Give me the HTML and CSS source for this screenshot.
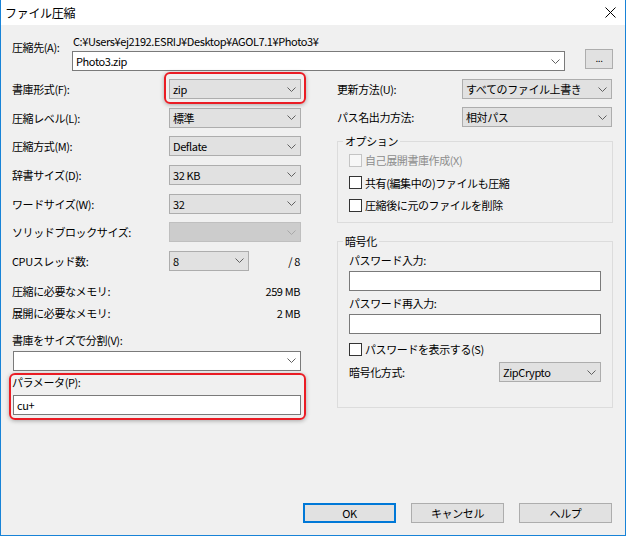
FILE: index.html
```html
<!DOCTYPE html>
<html lang="ja">
<head>
<meta charset="utf-8">
<title>ファイル圧縮</title>
<link rel="stylesheet" href="styles.css">
</head>
<body>
<div class="window">
  <div class="titlebar">
    <span class="title">ファイル圧縮</span>
    <svg class="close" width="11" height="11" viewBox="0 0 11 11"><path d="M0.5 0.5L10.5 10.5M10.5 0.5L0.5 10.5"/></svg>
  </div>
  <div class="content">
    <div class="dest">
      <div class="dest-label">圧縮先(A):</div>
      <div class="path">C:¥Users¥ej2192.ESRIJ¥Desktop¥AGOL7.1¥Photo3¥</div>
      <div class="combo edit dest-combo"><span>Photo3.zip</span><svg class="chev" width="9" height="5" viewBox="0 0 9 5"><path d="M0.5 0.5L4.5 4.5L8.5 0.5"/></svg></div>
      <div class="btn browse">...</div>
    </div>

    <div class="columns">
      <div class="left">
        <div class="lgrid">
          <div class="lbl">書庫形式(F):</div>
          <div class="hl"><div class="combo"><span>zip</span><svg class="chev" width="9" height="5" viewBox="0 0 9 5"><path d="M0.5 0.5L4.5 4.5L8.5 0.5"/></svg></div></div>

          <div class="lbl">圧縮レベル(L):</div>
          <div class="combo"><span>標準</span><svg class="chev" width="9" height="5" viewBox="0 0 9 5"><path d="M0.5 0.5L4.5 4.5L8.5 0.5"/></svg></div>

          <div class="lbl">圧縮方式(M):</div>
          <div class="combo"><span>Deflate</span><svg class="chev" width="9" height="5" viewBox="0 0 9 5"><path d="M0.5 0.5L4.5 4.5L8.5 0.5"/></svg></div>

          <div class="lbl">辞書サイズ(D):</div>
          <div class="combo"><span>32 KB</span><svg class="chev" width="9" height="5" viewBox="0 0 9 5"><path d="M0.5 0.5L4.5 4.5L8.5 0.5"/></svg></div>

          <div class="lbl">ワードサイズ(W):</div>
          <div class="combo"><span>32</span><svg class="chev" width="9" height="5" viewBox="0 0 9 5"><path d="M0.5 0.5L4.5 4.5L8.5 0.5"/></svg></div>

          <div class="lbl">ソリッドブロックサイズ:</div>
          <div class="combo disabled"><span></span><svg class="chev" width="9" height="5" viewBox="0 0 9 5"><path d="M0.5 0.5L4.5 4.5L8.5 0.5"/></svg></div>

          <div class="lbl">CPUスレッド数:</div>
          <div class="cpu">
            <div class="combo cpu-combo"><span>8</span><svg class="chev" width="9" height="5" viewBox="0 0 9 5"><path d="M0.5 0.5L4.5 4.5L8.5 0.5"/></svg></div>
            <span class="cpu-max">/ 8</span>
          </div>
        </div>

        <div class="mem mem1"><span>圧縮に必要なメモリ:</span><span>259 MB</span></div>
        <div class="mem mem2"><span>展開に必要なメモリ:</span><span>2 MB</span></div>

        <div class="split-label">書庫をサイズで分割(V):</div>
        <div class="combo edit split-combo"><span></span><svg class="chev" width="9" height="5" viewBox="0 0 9 5"><path d="M0.5 0.5L4.5 4.5L8.5 0.5"/></svg></div>

        <div class="param">
          <div class="param-label">パラメータ(P):</div>
          <div class="input param-input">cu+</div>
        </div>
      </div>

      <div class="right">
        <div class="rgrid">
          <div class="lbl">更新方法(U):</div>
          <div class="combo"><span>すべてのファイル上書き</span><svg class="chev" width="9" height="5" viewBox="0 0 9 5"><path d="M0.5 0.5L4.5 4.5L8.5 0.5"/></svg></div>
          <div class="lbl">パス名出力方法:</div>
          <div class="combo"><span>相対パス</span><svg class="chev" width="9" height="5" viewBox="0 0 9 5"><path d="M0.5 0.5L4.5 4.5L8.5 0.5"/></svg></div>
        </div>

        <fieldset class="group options">
          <legend>オプション</legend>
          <div class="check disabled"><span class="box"></span><span>自己展開書庫作成(X)</span></div>
          <div class="check"><span class="box"></span><span>共有(編集中の)ファイルも圧縮</span></div>
          <div class="check"><span class="box"></span><span>圧縮後に元のファイルを削除</span></div>
        </fieldset>

        <fieldset class="group crypt">
          <legend>暗号化</legend>
          <div class="flabel">パスワード入力:</div>
          <div class="input"></div>
          <div class="flabel">パスワード再入力:</div>
          <div class="input"></div>
          <div class="check show-pw"><span class="box"></span><span>パスワードを表示する(S)</span></div>
          <div class="method">
            <span>暗号化方式:</span>
            <div class="combo method-combo"><span>ZipCrypto</span><svg class="chev" width="9" height="5" viewBox="0 0 9 5"><path d="M0.5 0.5L4.5 4.5L8.5 0.5"/></svg></div>
          </div>
        </fieldset>
      </div>
    </div>

    <div class="buttons">
      <div class="btn default">OK</div>
      <div class="btn">キャンセル</div>
      <div class="btn">ヘルプ</div>
    </div>
  </div>
</div>
</body>
</html>
```

FILE: styles.css
```css
* { box-sizing: border-box; }
html, body { margin: 0; padding: 0; }
body {
  width: 626px;
  height: 536px;
  background: #f0f0f0;
  font-family: "Noto Sans CJK JP", "Noto Sans", sans-serif;
  font-size: 11px;
  line-height: 14px;
  letter-spacing: -0.4px;
  color: #000;
  overflow: hidden;
}
.window {
  width: 626px;
  height: 536px;
  display: flex;
  flex-direction: column;
  border: 1px solid #1883d7;
  border-top: 0;
  background: #f0f0f0;
}
.titlebar {
  height: 25px;
  flex: none;
  background: #fff;
  display: flex;
  align-items: center;
  justify-content: space-between;
  padding: 0 9px 0 4px;
}
.title { font-size: 12px; letter-spacing: -0.3px; }
.close path { stroke: #000; stroke-width: 1; fill: none; }

.content {
  flex: 1;
  display: flex;
  flex-direction: column;
  padding: 9px 12px 12px 11px;
}

/* destination row */
.dest {
  display: grid;
  grid-template-columns: 60px 493px 1fr;
  grid-template-rows: 14px 20px;
  row-gap: 3px;
}
.dest-label { grid-row: 1 / 3; grid-column: 1; margin-top: 6px; }
.path { grid-row: 1; grid-column: 2; padding-left: 1px; }
.dest-combo { grid-row: 2; grid-column: 2; }

/* combo boxes */
.combo {
  height: 20px;
  display: flex;
  align-items: center;
  justify-content: space-between;
  padding: 0 4px 0 3px;
  background: #e1e1e1;
  border: 1px solid #adadad;
  white-space: nowrap;
}
.combo.edit { background: #fff; border-color: #7a7a7a; }
.combo.disabled { background: #cccccc; border-color: #bfbfbf; }
.chev { flex: none; }
.chev path { fill: none; stroke: #606060; stroke-width: 1; }
.combo.disabled .chev path { stroke: #a8a8a8; }

.input {
  height: 20px;
  background: #fff;
  border: 1px solid #7a7a7a;
  padding: 0 3px;
  display: flex;
  align-items: center;
}

/* columns */
.columns { display: flex; margin-top: 8px; }
.left { width: 289px; display: flex; flex-direction: column; }
.right { width: 276px; margin-left: 36px; display: flex; flex-direction: column; }

.lgrid {
  display: grid;
  grid-template-columns: 157px 132px;
  grid-auto-rows: 20px;
  row-gap: 8.67px;
  align-items: center;
}
.hl { position: relative; }
.hl::after {
  content: "";
  position: absolute;
  top: -7px; left: -5px; right: -5px; bottom: -5px;
  border: 2px solid #ea1c24;
  border-radius: 6px;
  box-shadow: 0 1px 4px rgba(0,0,0,0.3);
}
.cpu { display: flex; align-items: center; }
.cpu-combo { width: 80px; }
.cpu-max { margin-left: auto; padding-right: 1px; }

.mem { display: flex; justify-content: space-between; padding-right: 1px; }
.mem1 { margin-top: 13px; }
.mem2 { margin-top: 8.5px; }
.split-label { margin-top: 12.5px; }
.split-combo { margin-top: 4px; margin-left: 1px; }

.param { position: relative; margin-top: 4px; }
.param::after {
  content: "";
  position: absolute;
  top: -2px; left: -3px; right: -5px; bottom: -5px;
  border: 2px solid #ea1c24;
  border-radius: 6px;
  box-shadow: 0 1px 4px rgba(0,0,0,0.3);
}
.param-input { margin-top: 6px; margin-left: 1px; }

/* right side */
.rgrid {
  display: grid;
  grid-template-columns: 125px 150px;
  grid-auto-rows: 20px;
  row-gap: 8px;
  align-items: center;
}
.group {
  margin: 0;
  border: 1px solid #dcdcdc;
  padding: 5px 11px 10px 11px;
  min-width: 0;
}
.group legend {
  padding: 0 2px;
  margin-left: -6px;
  line-height: 14px;
}
.options { margin-top: 7px; }
.crypt { margin-top: 11px; padding-bottom: 25px; }

.check { display: flex; align-items: center; height: 14px; gap: 3px; }
.check + .check { margin-top: 8.5px; }
.check .box {
  width: 13px; height: 13px;
  border: 1px solid #333;
  background: #fff;
  flex: none;
}
.check.disabled { color: #8d8d8d; }
.check.disabled .box { border-color: #c4c4c4; background: #f7f7f7; }

.flabel { margin-bottom: 4px; }
.input + .flabel { margin-top: 5px; }
.show-pw { margin-top: 8px; }
.method { display: flex; align-items: center; margin-top: 6px; }
.method-combo { width: 102px; margin-left: auto; }

/* buttons */
.btn {
  width: 93px;
  height: 20px;
  display: flex;
  align-items: center;
  justify-content: center;
  background: #e1e1e1;
  border: 1px solid #adadad;
}
.btn.default { border: 2px solid #0078d7; }
.btn.browse {
  grid-row: 2; grid-column: 3;
  justify-self: end;
  width: 28px; height: 20px;
  margin-top: -2px;
  font-size: 10px;
  padding-bottom: 3px;
}

.buttons {
  margin-top: auto;
  display: flex;
  justify-content: flex-end;
  gap: 15px;
  padding-right: 1px;
}
```
